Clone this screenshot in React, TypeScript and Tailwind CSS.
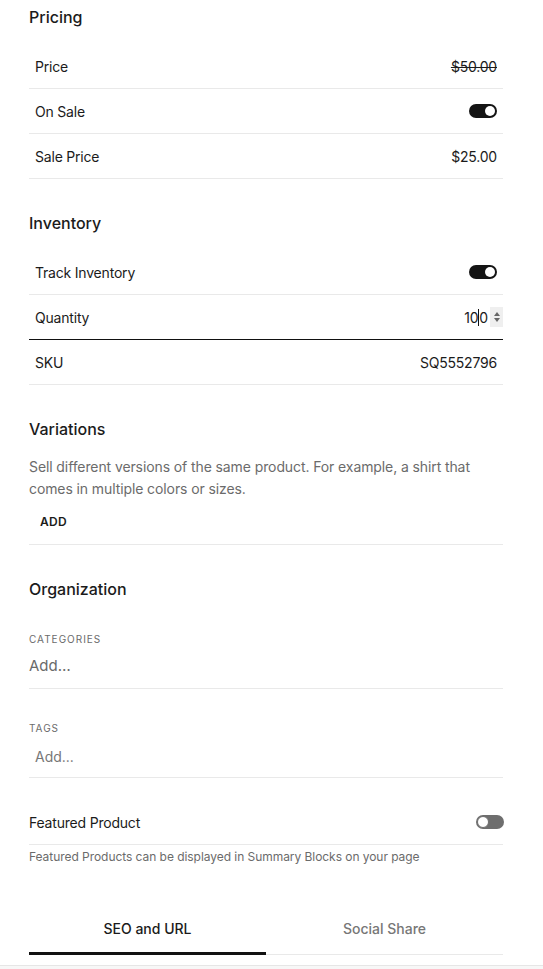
import React from "react"

function Toggle({ on }: { on: boolean }) {
  return on ? (
    <div className="flex h-[14px] w-[28px] items-center justify-end rounded-full bg-[#141414] px-[2px]">
      <div className="h-[10px] w-[10px] rounded-full bg-white" />
    </div>
  ) : (
    <div className="flex h-[14px] w-[28px] items-center justify-start rounded-full bg-[#6e6e6e] px-[1px]">
      <div className="h-[12px] w-[12px] rounded-full border border-[#6e6e6e] bg-white" />
    </div>
  )
}

function Row({ label, children, dark = false }: { label: string; children: React.ReactNode; dark?: boolean }) {
  return (
    <div
      className={`flex h-[45px] items-center justify-between border-b px-[6px] text-[14px] tracking-[-0.2px] ${
        dark ? "border-[#111]" : "border-[#e9e9e9]"
      }`}
    >
      <span>{label}</span>
      {children}
    </div>
  )
}

function Heading({ children }: { children: React.ReactNode }) {
  return <h2 className="h-[24px] text-[16px] leading-[24px] font-medium">{children}</h2>
}

export default function App() {
  return (
    <div className="min-h-screen w-[543px] bg-white font-['Inter',sans-serif] text-[#1b1b1b]">
      <div className="pt-[5px] pl-[29px] pr-[40px]">
        {/* Pricing */}
        <section>
          <Heading>Pricing</Heading>
          <div className="mt-[15px]">
            <Row label="Price">
              <span className="line-through">$50.00</span>
            </Row>
            <Row label="On Sale">
              <Toggle on />
            </Row>
            <Row label="Sale Price">
              <span>$25.00</span>
            </Row>
          </div>
        </section>

        {/* Inventory */}
        <section className="mt-[32px]">
          <Heading>Inventory</Heading>
          <div className="mt-[15px]">
            <Row label="Track Inventory">
              <Toggle on />
            </Row>
            <Row label="Quantity" dark>
              <div className="-mr-[6px] flex items-center">
                <span>10</span>
                <span className="h-[17px] w-px bg-[#111]" />
                <span>0</span>
                <div className="ml-[2px] flex h-[20px] w-[13px] flex-col items-center justify-center gap-[2px] bg-[#efefef]">
                  <span className="h-0 w-0 border-x-[3.5px] border-b-[4px] border-x-transparent border-b-[#666]" />
                  <span className="h-0 w-0 border-x-[3.5px] border-t-[4px] border-x-transparent border-t-[#666]" />
                </div>
              </div>
            </Row>
            <Row label="SKU">
              <span>SQ5552796</span>
            </Row>
          </div>
        </section>

        {/* Variations */}
        <section className="mt-[32px]">
          <Heading>Variations</Heading>
          <p className="mt-[15px] text-[14px] leading-[22px] tracking-[-0.1px] text-[#6b6b6b]">
            Sell different versions of the same product. For example, a shirt that comes in multiple colors or sizes.
          </p>
          <div className="flex h-[45px] items-center border-b border-[#e9e9e9] px-[11px]">
            <span className="text-[12px] font-semibold tracking-[0.3px]">ADD</span>
          </div>
        </section>

        {/* Organization */}
        <section className="mt-[32px]">
          <Heading>Organization</Heading>
          <div className="mt-[31px] h-[14px] text-[10px] leading-[14px] tracking-[1px] text-[#6b6b6b]">CATEGORIES</div>
          <div className="flex h-[43px] items-center border-b border-[#e9e9e9] pb-[1px] text-[15px] text-[#6a6a6a]">
            Add…
          </div>
          <div className="mt-[32px] h-[14px] text-[10px] leading-[14px] tracking-[1px] text-[#6b6b6b]">TAGS</div>
          <div className="flex h-[43px] items-center border-b border-[#e9e9e9] px-[6px] text-[14px] text-[#777]">
            Add...
          </div>

          <div className="mt-[22px] flex h-[45px] items-center justify-between border-b border-[#e9e9e9] text-[14px] tracking-[-0.2px]">
            <span>Featured Product</span>
            <div className="-mr-px">
              <Toggle on={false} />
            </div>
          </div>
          <p className="mt-[4px] text-[12px] leading-[16px] tracking-[-0.05px] text-[#6b6b6b]">
            Featured Products can be displayed in Summary Blocks on your page
          </p>
        </section>

        {/* Tabs */}
        <div className="mt-[39px] grid grid-cols-2">
          <div className="flex h-[51px] items-center justify-center border-b-[3px] border-[#111] text-[14px] font-medium">
            SEO and URL
          </div>
          <div className="flex h-[51px] items-center justify-center border-b border-[#e9e9e9] pb-[2px] text-[14px] font-medium text-[#777]">
            Social Share
          </div>
        </div>
      </div>
      <div className="mt-[10px] h-[20px] border-t border-[#e6e6e6] bg-[#f7f7f7]" />
    </div>
  )
}
